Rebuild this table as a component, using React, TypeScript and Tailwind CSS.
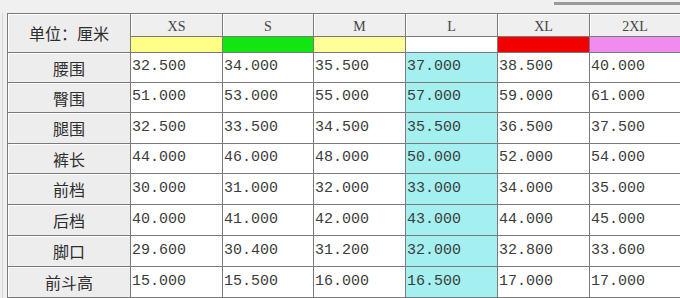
const sizes = [
  { name: 'XS', bar: 'bg-[#ffff88]' },
  { name: 'S', bar: 'bg-[#11e611]' },
  { name: 'M', bar: 'bg-[#ffff99]' },
  { name: 'L', bar: 'bg-white' },
  { name: 'XL', bar: 'bg-[#f20000]' },
  { name: '2XL', bar: 'bg-[#f08cf0]' },
];

const rows: [string, string[]][] = [
  ['腰围', ['32.500', '34.000', '35.500', '37.000', '38.500', '40.000']],
  ['臀围', ['51.000', '53.000', '55.000', '57.000', '59.000', '61.000']],
  ['腿围', ['32.500', '33.500', '34.500', '35.500', '36.500', '37.500']],
  ['裤长', ['44.000', '46.000', '48.000', '50.000', '52.000', '54.000']],
  ['前档', ['30.000', '31.000', '32.000', '33.000', '34.000', '35.000']],
  ['后档', ['40.000', '41.000', '42.000', '43.000', '44.000', '45.000']],
  ['脚口', ['29.600', '30.400', '31.200', '32.000', '32.800', '33.600']],
  ['前斗高', ['15.000', '15.500', '16.000', '16.500', '17.000', '17.000']],
];

const cjk = "font-['Noto_Sans_CJK_SC','Noto_Sans',sans-serif]";
const mono = "font-['Liberation_Mono',monospace]";
const serif = "font-['Liberation_Serif',serif]";

export default function App() {
  return (
    <div className="w-[680px] h-[298px] overflow-hidden bg-[#f0f0f0] flex flex-col">
      <div className="h-[13px] flex justify-end pt-[2px] shrink-0">
        <div className="w-[126px] h-[3px] bg-[#9a9a9a]" />
      </div>
      <div className="flex flex-1 pl-[2px]">
        <div className="border-l border-[#d4d4d4] pl-[4px] flex-1">
          <div className="grid w-[673px] grid-cols-[122px_91px_90px_91px_91px_91px_90px] grid-rows-[22px_15px_29px_29px_30px_29px_30px_30px_30px_30px] gap-px bg-[#7a7a7a] border border-[#7a7a7a]">
            <div
              className={`row-span-2 bg-[#ededed] shadow-[inset_1px_1px_0_#fff] flex items-center justify-center text-[16px] text-[#2e2e2e] ${cjk}`}
            >
              单位：厘米
            </div>
            {sizes.map((s) => (
              <div
                key={s.name}
                className={`bg-[#efefef] shadow-[inset_1px_1px_0_#fff] flex items-center justify-center pt-[2px] text-[14px] text-[#444] ${serif}`}
              >
                {s.name}
              </div>
            ))}
            {sizes.map((s) => (
              <div key={s.name + '-bar'} className={s.bar} />
            ))}
            {rows.map(([label, vals]) => (
              <div key={label} className="contents">
                <div
                  className={`bg-[#ededed] shadow-[inset_1px_1px_0_#fff] flex items-center justify-center text-[16px] text-[#2e2e2e] ${cjk}`}
                >
                  {label}
                </div>
                {vals.map((v, i) => (
                  <div
                    key={i}
                    className={`${i === 3 ? 'bg-[#a4f0f0]' : 'bg-white'} flex items-center pl-px text-[15px] text-[#3c3c3c] ${mono}`}
                  >
                    {v}
                  </div>
                ))}
              </div>
            ))}
          </div>
        </div>
      </div>
    </div>
  );
}
